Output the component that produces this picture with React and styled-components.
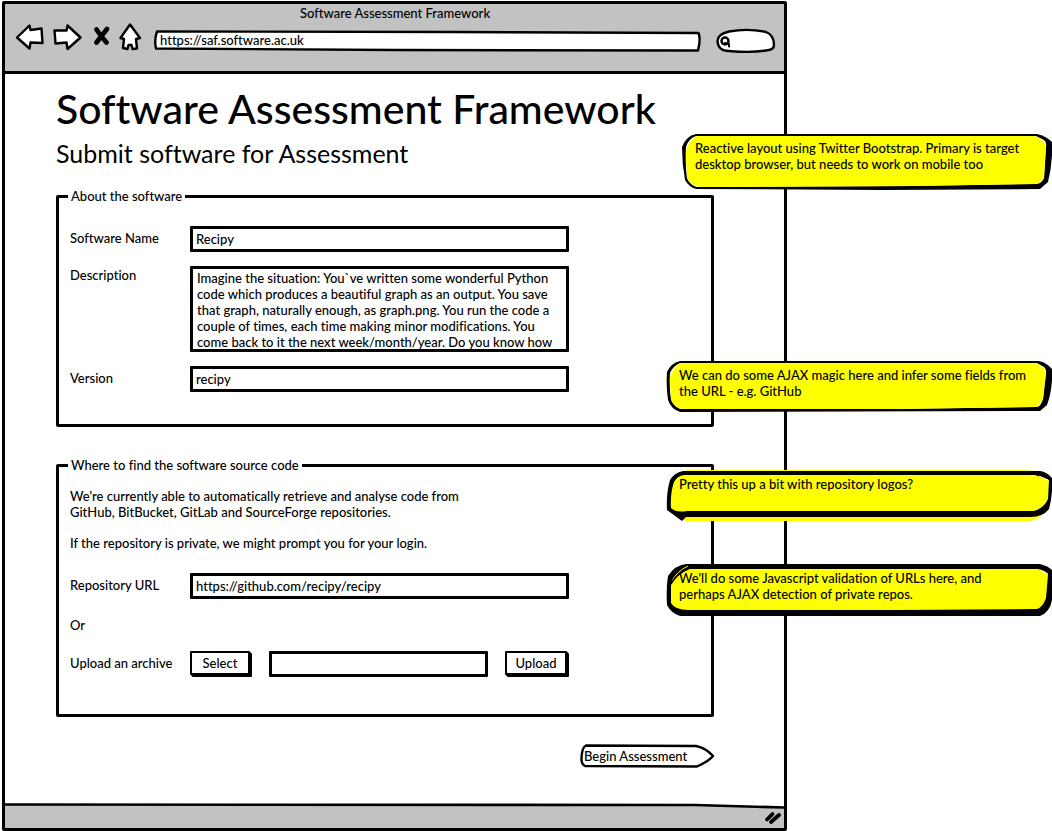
import React from 'react';
import styled, { createGlobalStyle } from 'styled-components';

const GlobalStyle = createGlobalStyle`
  * { box-sizing: border-box; }
  body { margin: 0; background: #fff; color: #000; }
  body, button, input, textarea {
    font-family: Lato, "Liberation Sans", sans-serif;
    font-size: 13px;
    font-weight: 500;
    font-variant-ligatures: none;
    line-height: 16px;
  }
`;

const Board = styled.div`
  display: grid;
  grid-template-columns: minmax(0, 1fr) 121px 265px;
  padding: 1px 0 1px 2px;
`;

const Browser = styled.div`
  grid-column: 1 / 3;
  grid-row: 1;
  display: flex;
  flex-direction: column;
  border: 3px solid #000;
  border-radius: 2px;
`;

const Chrome = styled.header`
  background: #c2c2c2;
  border-bottom: 3px solid #000;
  padding: 1px 9px 12px 10px;
`;

const WindowTitle = styled.div`
  height: 18px;
  text-align: center;
  font-size: 13px;
`;

const Toolbar = styled.nav`
  display: flex;
  align-items: center;
  gap: 8px;
  height: 36px;
`;

const ToolButton = styled.button`
  flex: none;
  width: ${(p) => p.$width}px;
  height: 36px;
  padding: 0;
  border: 0;
  background: none;
  svg { display: block; }
`;

const AddressBox = styled.div`
  position: relative;
  flex: 1;
  min-width: 0;
  height: 22px;
`;

const SearchBox = styled.div`
  position: relative;
  flex: none;
  width: 59px;
  height: 24px;
  margin-left: 7px;
`;

const Outline = styled.svg`
  position: absolute;
  inset: 0;
  width: 100%;
  height: 100%;
  overflow: visible;
`;

const BareInput = styled.input`
  position: relative;
  display: block;
  width: 100%;
  height: 20px;
  padding: 0 6px;
  border: 0;
  outline: 0;
  background: transparent;
  color: #000;
`;

const Content = styled.main`
  padding: 11px 70px 35px 51px;
`;

const PageTitle = styled.h1`
  margin: 0;
  font-size: 41px;
  line-height: 48px;
  font-weight: 500;
  white-space: nowrap;
`;

const PageSubtitle = styled.h2`
  margin: 6px 0 21px;
  font-size: 25px;
  line-height: 28px;
  font-weight: 400;
`;

const Group = styled.fieldset`
  margin: 0 0 ${(p) => p.$after}px;
  min-width: 0;
  border: 3px solid #000;
  border-radius: 2px;
  padding: ${(p) => p.$top}px 9px ${(p) => p.$bottom}px;
`;

const GroupTitle = styled.legend`
  padding: 0 3px;
`;

const Fields = styled.div`
  display: grid;
  grid-template-columns: 120px minmax(0, 379px);
  row-gap: 14px;
  padding-left: 2px;
`;

const Label = styled.label`
  padding-top: ${(p) => p.$top ?? 4}px;
`;

const TextInput = styled.input`
  width: 100%;
  min-width: 0;
  height: 26px;
  padding: 0 3px;
  border: 3px solid #000;
  border-radius: 1px;
  background: #fff;
  color: #000;
  outline: 0;
`;

const TextArea = styled.textarea`
  display: block;
  width: 100%;
  height: 86px;
  padding: 1px 4px 0;
  border: 3px solid #000;
  border-radius: 1px;
  background: #fff;
  color: #000;
  resize: none;
  overflow: hidden;
  white-space: pre;
  outline: 0;
`;

const Help = styled.p`
  margin: 0 0 15px 2px;
  max-width: 480px;
`;

const RepositoryFields = styled(Fields)`
  padding-top: 7px;
  row-gap: 18px;
`;

const Either = styled.div`
  grid-column: 1 / 3;
`;

const UploadRow = styled.div`
  display: flex;
  align-items: flex-start;
  gap: 17px;
`;

const SketchButton = styled.button`
  flex: none;
  height: 24px;
  padding: 0;
  border: 2px solid #000;
  border-radius: 1px;
  background: #fff;
  color: #000;
  box-shadow: 1px 1px 0 #000, 2px 2px 0 #000;
  margin-right: 2px;
  width: ${(p) => p.$width}px;
`;

const Actions = styled.div`
  display: flex;
  justify-content: flex-end;
`;

const BeginButton = styled.button`
  position: relative;
  width: 134px;
  height: 24px;
  padding: 0 0 0 4px;
  border: 0;
  background: none;
  color: #000;
  text-align: left;
  white-space: nowrap;
  span { position: relative; }
`;

const StatusBar = styled.footer`
  display: flex;
  flex-direction: column;
  background: #c2c2c2;
`;

const StatusEdge = styled.svg`
  display: block;
  width: 100%;
  height: 6px;
`;

const ResizeGrip = styled.svg`
  align-self: flex-end;
  width: 18px;
  height: 14px;
  margin: 2px 2px 3px 0;
`;

const Notes = styled.aside`
  grid-column: 2 / 4;
  grid-row: 1;
  z-index: 1;
  display: flex;
  flex-direction: column;
  align-items: flex-end;
  padding: 133px 0 0;
`;

const NoteCard = styled.div`
  position: relative;
  width: ${(p) => (p.$narrow ? 370 : 386)}px;
  height: ${(p) => p.$height}px;
  margin-bottom: ${(p) => p.$gap}px;
  padding: 6px 4px 0 13px;
`;

const NoteText = styled.p`
  position: relative;
  margin: 0;
  white-space: pre-line;
`;

function Note({ text, height, gap, narrow, children }) {
  const width = narrow ? 370 : 386;
  return (
    <NoteCard $height={height} $gap={gap} $narrow={narrow}>
      <Outline viewBox={`0 0 ${width} ${height}`} preserveAspectRatio="none" aria-hidden="true">
        {children}
      </Outline>
      <NoteText>{text}</NoteText>
    </NoteCard>
  );
}

const stroke = {
  stroke: '#000',
  strokeWidth: 2.4,
  strokeLinejoin: 'round',
  strokeLinecap: 'round',
};

const description = [
  'Imagine the situation: You`ve written some wonderful Python',
  'code which produces a beautiful graph as an output. You save',
  'that graph, naturally enough, as graph.png. You run the code a',
  'couple of times, each time making minor modifications. You',
  'come back to it the next week/month/year. Do you know how',
].join('\n');

export default function App() {
  return (
    <>
      <GlobalStyle />
      <Board>
        <Browser>
          <Chrome>
            <WindowTitle>Software Assessment Framework</WindowTitle>
            <Toolbar>
              <ToolButton $width={30} aria-label="Back">
                <svg width="30" height="36" viewBox="0 0 30 36">
                  <path d="M2 14.5 L14.5 2.5 L15.5 7 L26.5 5.5 L27.5 20 L15.5 19.5 L14.5 25.5 Z" fill="#fff" {...stroke} />
                </svg>
              </ToolButton>
              <ToolButton $width={30} aria-label="Forward">
                <svg width="30" height="36" viewBox="0 0 30 36">
                  <path d="M1.5 7.5 L13.5 7.5 L14.5 2.5 L27.5 14.5 L14.5 26 L13.5 19.5 L2.5 20.5 Z" fill="#fff" {...stroke} />
                </svg>
              </ToolButton>
              <ToolButton $width={20} aria-label="Stop">
                <svg width="20" height="36" viewBox="0 0 20 36">
                  <path d="M5.500 6.500 L10 13 L15.500 19.500 M16 6 L10.500 13 L5.500 19.500" fill="none" {...stroke} strokeWidth="4.800" />
                </svg>
              </ToolButton>
              <ToolButton $width={27} aria-label="Home">
                <svg width="27" height="36" viewBox="0 0 27 36">
                  <path d="M11 1.5 L21 15 L17 16 L18 25.5 L13.5 26 L12.5 22 L9.500 22 L8.500 26 L4 25 L5 16 L1.500 15 Z" fill="#fff" {...stroke} />
                </svg>
              </ToolButton>
              <AddressBox>
                <Outline viewBox="0 0 547 22" preserveAspectRatio="none" aria-hidden="true">
                  <path d="M3 1.500 L300 2 L544.500 3 Q547 9 544 20.500 L240 20 L2 18.500 Q0 10 3 1.500 Z" fill="#fff" {...stroke} />
                </Outline>
                <BareInput aria-label="Address" defaultValue="https://saf.software.ac.uk" />
              </AddressBox>
              <SearchBox>
                <Outline viewBox="0 0 59 24" preserveAspectRatio="none" aria-hidden="true">
                  <path d="M13 2.500 Q32 -1 50 3 Q58 6 58 16 Q58 21 50 21.500 Q36 24 13 22 Q2 22 1.500 12 Q1.500 5 13 2.500 Z" fill="#fff" {...stroke} />
                  <circle cx="9" cy="12" r="3.500" fill="none" {...stroke} />
                  <path d="M9 14 L13 15 L13 17.500" fill="none" {...stroke} strokeWidth="2" />
                </Outline>
                <BareInput aria-label="Search" />
              </SearchBox>
            </Toolbar>
          </Chrome>

          <Content>
            <PageTitle>Software Assessment Framework</PageTitle>
            <PageSubtitle>Submit software for Assessment</PageSubtitle>

            <Group $top={22} $bottom={32} $after={30}>
              <GroupTitle>About the software</GroupTitle>
              <Fields>
                <Label htmlFor="name">Software Name</Label>
                <TextInput id="name" defaultValue="Recipy" />
                <Label htmlFor="description" $top={1}>Description</Label>
                <TextArea id="description" defaultValue={description} />
                <Label htmlFor="version">Version</Label>
                <TextInput id="version" defaultValue="recipy" />
              </Fields>
            </Group>

            <Group $top={15} $bottom={37} $after={27}>
              <GroupTitle>Where to find the software source code</GroupTitle>
              <Help>
                We're currently able to automatically retrieve and analyse code from
                <br />
                GitHub, BitBucket, GitLab and SourceForge repositories.
              </Help>
              <Help>If the repository is private, we might prompt you for your login.</Help>
              <RepositoryFields>
                <Label htmlFor="repository">Repository URL</Label>
                <TextInput id="repository" defaultValue="https://github.com/recipy/recipy" />
                <Either>Or</Either>
                <Label htmlFor="archive">Upload an archive</Label>
                <UploadRow>
                  <SketchButton type="button" $width={60}>Select</SketchButton>
                  <TextInput id="archive" />
                  <SketchButton type="button" $width={62}>Upload</SketchButton>
                </UploadRow>
              </RepositoryFields>
            </Group>

            <Actions>
              <BeginButton type="button">
                <Outline viewBox="0 0 134 24" preserveAspectRatio="none" aria-hidden="true">
                  <path d="M6 1.500 L116 2 Q126 4 133 12 Q129 17 117 22.500 L5 22 Q1 20 1.500 14 Q2 3 6 1.500 Z" fill="#fff" {...stroke} />
                </Outline>
                <span>Begin Assessment</span>
              </BeginButton>
            </Actions>
          </Content>

          <StatusBar>
            <StatusEdge viewBox="0 0 779 6" preserveAspectRatio="none" aria-hidden="true">
              <path d="M0 0 H779 V4 L690 1.500 L0 1.500 Z" fill="#fff" />
              <path d="M0 1.500 L690 2 L779 4.500" fill="none" stroke="#000" strokeWidth="2.600" />
            </StatusEdge>
            <ResizeGrip viewBox="0 0 18 14" aria-hidden="true">
              <path d="M3 8.500 L8.500 3 M7 11 L15 4" fill="none" {...stroke} strokeWidth="3.800" />
            </ResizeGrip>
          </StatusBar>
        </Browser>

        <Notes>
          <Note
            narrow
            height={56}
            gap={171}
            text={'Reactive layout using Twitter Bootstrap. Primary is target\ndesktop browser, but needs to work on mobile too'}
          >
            <path d="M14 0 L200 0 L355 0 Q364 2 370 8 Q371 28 366 48 L358 55 L200 56 L14 55 Q7 53 3 46 Q0 30 0 13 Q4 2 14 0 Z" />
            <path d="M14 2 L200 2 L354 2 L362 6 Q365 9 364 12 L362 44 Q360 49 355 50 L230 52 L14 53 Q7 50 5 44 Q3 30 4 13 Q6 5 14 2 Z" fill="#fff" />
            <path d="M15 2 L353 2 Q363 6 364 13 L362 44 L355 50 L230 52 L16 53 Q8 50 5 44 Q4 30 4 16 Q8 5 15 2 Z" fill="#ff0" />
          </Note>
          <Note
            height={51}
            gap={58}
            text={'We can do some AJAX magic here and infer some fields from\nthe URL - e.g. GitHub'}
          >
            <path d="M14 0 H373 Q381 2 386 8 Q387 28 381 44 L374 50 L14 51 Q5 48 2 39 Q0 26 1 11 Q5 2 14 0 Z" />
            <path d="M14 2 H371 L378 6 Q381 9 380 12 L377 38 Q375 45 371 46 L230 48 L14 48 Q7 45 5 38 Q3 26 4 12 Q7 5 14 2 Z" fill="#fff" />
            <path d="M15 2 H369 Q379 6 380 12 L377 38 L371 46 L230 48 L16 48 Q8 46 5 39 Q4 26 4 15 Q8 5 15 2 Z" fill="#ff0" />
          </Note>
          <Note height={52} gap={42} text="Pretty this up a bit with repository logos?">
            <path d="M20 0 H362 L378 3 L384 12 L380 40 Q374 50 363 51 H20 L10 43 L4 20 Q10 4 20 0 Z" fill="#ff0" />
            <path d="M17 1 H374 Q381 2 386 8 Q387 25 383 39 Q377 47 364 47 H20 L16 51 L1 40 Q0 24 4 10 Q8 3 17 1 Z" />
            <path d="M18 5 H369 L383 10 L382 29 Q378 38 368 41 H21 Q10 43 5 38 Q4 24 8 12 Q11 6 18 5 Z" fill="#ff0" />
            <path d="M373 6 L382 10" fill="none" stroke="#fff" strokeWidth="1" />
          </Note>
          <Note
            height={52}
            gap={0}
            text={'We\'ll do some Javascript validation of URLs here, and\nperhaps AJAX detection of private repos.'}
          >
            <path d="M20 0 H374 Q382 2 386 6 V36 Q384 48 374 52 H14 Q5 49 1 41 Q0 24 2 12 Q9 1 20 0 Z" />
            <path d="M22 5 H372 Q381 7 382 11 L380 34 Q377 43 371 45 L230 46 H22 Q9 46 5 39 V21 Q11 9 22 5 Z" fill="#ff0" />
            <path d="M6 17 Q11 7 22 2" fill="none" stroke="#ff0" strokeWidth="1" />
            <path d="M374 6 L382 10" fill="none" stroke="#fff" strokeWidth="1" />
            <path d="M5 20 Q10 10 24 4" fill="none" stroke="#000" strokeWidth="1.500" />
          </Note>
        </Notes>
      </Board>
    </>
  );
}
